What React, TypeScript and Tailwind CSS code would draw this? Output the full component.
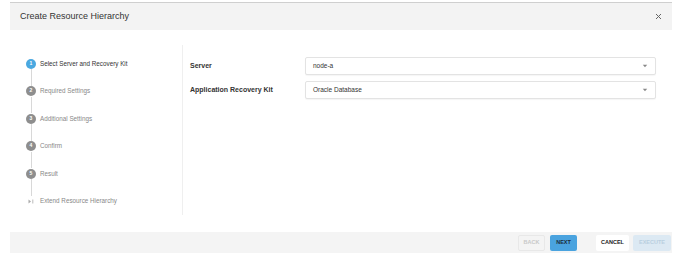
import React from "react";

const steps = [
  { n: "1", label: "Select Server and Recovery Kit", active: true },
  { n: "2", label: "Required Settings" },
  { n: "3", label: "Additional Settings" },
  { n: "4", label: "Confirm" },
  { n: "5", label: "Result" },
];

function Caret() {
  return (
    <svg width="6" height="4" viewBox="0 0 6 4" className="text-[#888]">
      <path d="M0.8 0.8 L5.2 0.8 L3 3.2 Z" fill="currentColor" />
    </svg>
  );
}

function Select({ value }: { value: string }) {
  return (
    <div className="flex h-[18px] flex-1 items-center justify-between rounded-[2px] border border-[#e3e3e3] bg-white pl-[7px] pr-[7px] text-[6.5px] text-[#333] shadow-[0_1px_1px_rgba(0,0,0,0.04)]">
      <span>{value}</span>
      <Caret />
    </div>
  );
}

export default function App() {
  return (
    <div
      className="h-[262px] w-[681px] bg-white pl-[10px] pr-[9px] pt-[2px]"
      style={{ fontFamily: '"Liberation Sans", Arial, sans-serif' }}
    >
      <div className="flex h-[28px] items-center justify-between border-t border-[#cfcfcf] bg-[#f3f3f3] pl-[10px] pr-[10px]">
        <span className="text-[9px] text-[#333]">Create Resource Hierarchy</span>
        <svg width="7" height="7" viewBox="0 0 7 7" className="text-[#666]">
          <path d="M1 1 L6 6 M6 1 L1 6" stroke="currentColor" strokeWidth="1" />
        </svg>
      </div>

      <div className="flex h-[202px] items-start pt-[15px]">
        <div className="h-[170px] w-[173px] border-r border-[#efefef] pl-[16px] pt-[13px]">
          {steps.map((s) => (
            <div key={s.n}>
              <div className="flex h-[11px] items-center gap-[4px]">
                <div
                  className={
                    "flex h-[10px] w-[10px] items-center justify-center rounded-full text-[5px] font-bold text-white " +
                    (s.active ? "bg-[#4aa8e0]" : "bg-[#8e8e8e]")
                  }
                >
                  {s.n}
                </div>
                <span className={"text-[6.3px] " + (s.active ? "text-[#333]" : "text-[#888]")}>
                  {s.label}
                </span>
              </div>
              <div className="ml-[4.5px] h-[16.5px] w-px bg-[#d8d8d8]" />
            </div>
          ))}
          <div className="flex h-[11px] items-center gap-[4px]">
            <span className="flex w-[10px] items-center justify-center text-[#aaa]">
              <svg width="6" height="5" viewBox="0 0 6 5">
                <path d="M0.5 0.5 L3 2.5 L0.5 4.5 Z" fill="currentColor" />
                <path d="M4.8 0.5 V4.5" stroke="currentColor" strokeWidth="0.8" />
              </svg>
            </span>
            <span className="text-[6.3px] text-[#888]">Extend Resource Hierarchy</span>
          </div>
        </div>

        <div className="flex flex-1 flex-col gap-[6px] pl-[7px] pr-[16px] pt-[12px]">
          <div className="flex items-center">
            <span className="w-[115px] text-[7px] font-bold text-[#333]">Server</span>
            <Select value="node-a" />
          </div>
          <div className="flex items-center">
            <span className="w-[115px] text-[7px] font-bold text-[#333]">Application Recovery Kit</span>
            <Select value="Oracle Database" />
          </div>
        </div>
      </div>

      <div className="flex h-[21px] items-center justify-end bg-[#f4f4f4] pr-px">
        <div className="flex gap-[5px]">
          <button className="h-[16px] w-[27px] rounded-[2px] border border-[#e8e8e8] bg-[#f4f4f4] text-[5.5px] font-bold text-[#c8c8c8]">
            BACK
          </button>
          <button className="h-[16px] w-[27px] rounded-[2px] bg-[#4aa3df] text-[5.5px] font-bold text-[#1a2b3a]">
            NEXT
          </button>
        </div>
        <div className="ml-[19px] flex gap-[4px]">
          <button className="h-[16px] w-[33px] rounded-[2px] bg-white text-[5.5px] font-bold text-[#222]">
            CANCEL
          </button>
          <button className="h-[16px] w-[38px] rounded-[2px] bg-[#dce9f3] text-[5.5px] font-bold text-[#b9cfe0]">
            EXECUTE
          </button>
        </div>
      </div>
    </div>
  );
}
